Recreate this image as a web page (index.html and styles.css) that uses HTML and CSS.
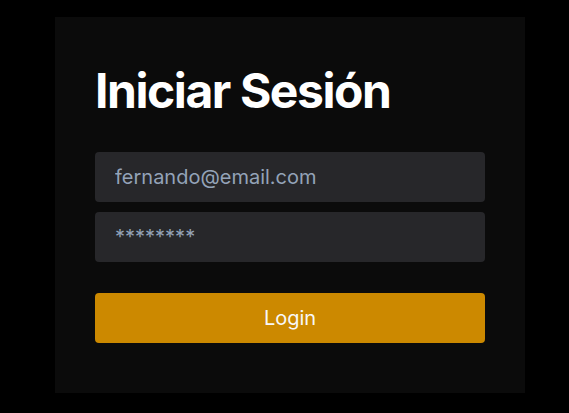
FILE: index.html
```html
<!DOCTYPE html>
<html lang="es">
<head>
<meta charset="utf-8">
<title>Iniciar Sesión</title>
<link rel="stylesheet" href="styles.css">
</head>
<body>
<main class="page">
  <form class="card">
    <h1 class="title">Iniciar Sesión</h1>
    <div class="fields">
      <input class="field" type="text" value="fernando@email.com">
      <input class="field" type="text" value="********">
    </div>
    <button class="btn" type="button">Login</button>
  </form>
</main>
</body>
</html>
```

FILE: styles.css
```css
* { box-sizing: border-box; }
html, body { margin: 0; padding: 0; background: #000; }
body { font-family: Inter, "Noto Sans", sans-serif; }
.page {
  padding: 17px 0 0 55px;
}
.card {
  width: 470px;
  height: 376px;
  background: #0b0b0b;
  padding: 45px 40px 50px;
  display: flex;
  flex-direction: column;
}
.title {
  margin: 0;
  font-size: 48px;
  font-weight: 700;
  line-height: 58px;
  color: #fff;
  letter-spacing: -0.03em;
}
.fields {
  margin-top: 32px;
  display: flex;
  flex-direction: column;
  gap: 10px;
}
.field {
  height: 50px;
  width: 100%;
  border: none;
  border-radius: 4px;
  background: #27272a;
  color: #94a3b8;
  font-family: Inter, "Noto Sans", sans-serif;
  font-size: 20px;
  padding: 0 20px;
  outline: none;
}
.btn {
  margin-top: 31px;
  height: 50px;
  width: 100%;
  border: none;
  border-radius: 4px;
  background: #cc8900;
  color: #f8f8f8;
  font-family: Inter, "Noto Sans", sans-serif;
  font-size: 20px;
  font-weight: 400;
}
```
